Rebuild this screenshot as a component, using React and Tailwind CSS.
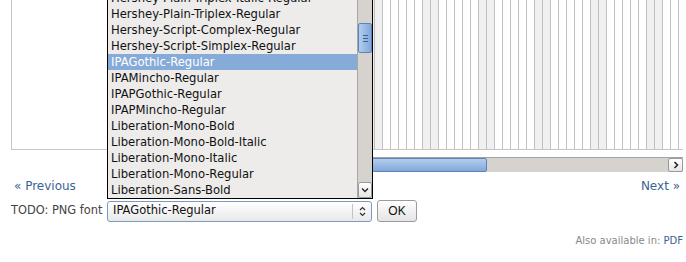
import React from "react";

const fonts = [
  "Hershey-Plain-Triplex-Italic-Regular",
  "Hershey-Plain-Triplex-Regular",
  "Hershey-Script-Complex-Regular",
  "Hershey-Script-Simplex-Regular",
  "IPAGothic-Regular",
  "IPAMincho-Regular",
  "IPAPGothic-Regular",
  "IPAPMincho-Regular",
  "Liberation-Mono-Bold",
  "Liberation-Mono-Bold-Italic",
  "Liberation-Mono-Italic",
  "Liberation-Mono-Regular",
  "Liberation-Sans-Bold",
];

const selected = "IPAGothic-Regular";

// 71 day columns, weekends shaded
const days = Array.from({ length: 71 }, (_, i) => i);

const App = () => {
  return (
    <div
      className="relative w-[686px] h-[262px] overflow-hidden bg-white text-[#222]"
      style={{ fontFamily: '"DejaVu Sans", Verdana, sans-serif' }}
    >
      {/* chart box */}
      <div className="mt-[-1px] ml-[11px] w-[672px] h-[151px] border-l border-b border-[#c6c6c6] flex">
        <div className="w-[98px]" />
        <div className="flex h-full border-r border-[#c0c0c0]">
          {days.map((i) => (
            <div
              key={i}
              className={`w-[8px] h-full border-l border-[#c0c0c0] ${
                i % 7 === 4 || i % 7 === 5 ? "bg-[#f0f0f0]" : "bg-white"
              }`}
            />
          ))}
        </div>
      </div>

      {/* horizontal scrollbar */}
      <div className="mt-[7px] ml-[110px] w-[573px] h-[15px] flex border-t border-[#a3a3a3] bg-[#d6d3cf]">
        <div className="w-[377px] h-full flex items-center justify-center rounded-[2px] border border-[#5f83b5] bg-gradient-to-b from-[#b3cdef] to-[#82a8da]">
          <div className="flex gap-[2px] ml-[-10px]">
            <span className="w-px h-[5px] bg-[#3f5f8c]" />
            <span className="w-px h-[5px] bg-[#3f5f8c]" />
            <span className="w-px h-[5px] bg-[#3f5f8c]" />
          </div>
        </div>
        <div className="flex-1" />
        <div className="w-[15px] h-full flex items-center justify-center rounded-[2px] border border-[#9a9a9a] bg-gradient-to-b from-white to-[#e6e6e6]">
          <svg width="6" height="8" viewBox="0 0 6 8">
            <path d="M1.5 1 L4.5 4 L1.5 7" fill="none" stroke="#222" strokeWidth="1.5" />
          </svg>
        </div>
      </div>

      {/* prev / next */}
      <div className="mt-[6px] h-[16px] flex items-center justify-between pl-[14px] pr-[6px] text-[12px] leading-[16px] text-[#3b6392]">
        <span>« Previous</span>
        <span>Next »</span>
      </div>

      {/* font form */}
      <div className="mt-[6px] ml-[11px] flex items-center h-[22px]">
        <span className="w-[96px] text-[11.4px] text-[#444] whitespace-nowrap">TODO: PNG font</span>
        <div className="w-[265px] h-[21px] flex items-center rounded-[3px] border border-[#7c99c2] bg-gradient-to-b from-white to-[#e9e9e9]">
          <span className="flex-1 pl-[5px] text-[11.5px] text-[#111]">{selected}</span>
          <div className="w-px h-[15px] bg-[#c4c4c4]" />
          <div className="w-[18px] flex justify-center">
            <svg width="7" height="11" viewBox="0 0 7 11">
              <path d="M1 4 L3.5 1.5 L6 4 M1 7 L3.5 9.5 L6 7" fill="none" stroke="#333" strokeWidth="1.2" />
            </svg>
          </div>
        </div>
        <button
          className="ml-[5px] w-[40px] h-[22px] rounded-[3px] border border-[#9c9c9c] bg-gradient-to-b from-white to-[#e4e4e4] text-[12px] text-[#111]"
          style={{ fontFamily: '"Liberation Sans", Arial, sans-serif' }}
        >
          OK
        </button>
      </div>

      {/* alternate formats */}
      <div className="mt-[12px] pr-[3px] flex justify-end text-[10px] leading-[14px] text-[#888]">
        <span>
          Also available in: <span className="text-[#3b6392]">PDF</span>
        </span>
      </div>

      {/* open select popup */}
      <div className="absolute left-[107px] top-[-11px] w-[266px] h-[210px] border border-black bg-[#edeceb] flex">
        <div className="flex-1">
          {fonts.map((f) => (
            <div
              key={f}
              className={`h-[16px] leading-[16px] pl-[3px] text-[11.6px] whitespace-nowrap ${
                f === selected ? "bg-[#86abd9] text-white" : "text-[#111]"
              }`}
            >
              {f}
            </div>
          ))}
        </div>
        <div className="w-[15px] h-full border-l border-[#a8a8a8] bg-[#d6d3cf] flex flex-col">
          <div className="mt-[33px] h-[30px] rounded-[2px] border border-[#5f83b5] bg-gradient-to-r from-[#b3cdef] to-[#82a8da] flex flex-col items-center justify-center gap-[2px]">
            <span className="w-[5px] h-px bg-[#3f5f8c]" />
            <span className="w-[5px] h-px bg-[#3f5f8c]" />
            <span className="w-[5px] h-px bg-[#3f5f8c]" />
          </div>
          <div className="flex-1" />
          <div className="h-[16px] rounded-[2px] border border-[#9a9a9a] bg-gradient-to-b from-white to-[#e6e6e6] flex items-center justify-center">
            <svg width="8" height="6" viewBox="0 0 8 6">
              <path d="M1 1.5 L4 4.5 L7 1.5" fill="none" stroke="#222" strokeWidth="1.3" />
            </svg>
          </div>
        </div>
      </div>
    </div>
  );
};

export default App;
